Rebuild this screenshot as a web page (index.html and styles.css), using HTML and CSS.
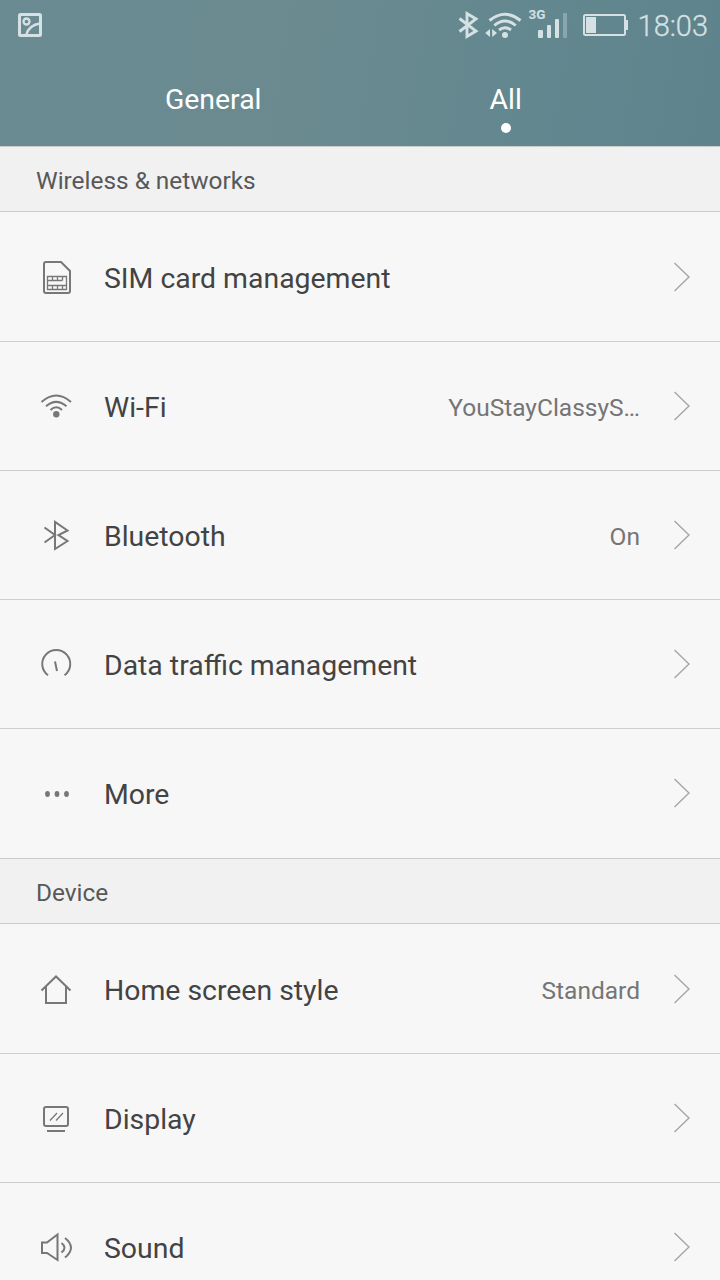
FILE: index.html
```html
<!DOCTYPE html>
<html lang="en">
<head>
  <meta charset="utf-8">
  <title>Settings</title>
  <link rel="stylesheet" href="styles.css">
</head>
<body>

<div class="screen">
  <header class="header">
    <div class="status">
      <svg class="status-photo" width="24" height="24" viewBox="0 0 24 24">
        <rect x="1.500" y="1.500" width="21" height="21" rx="1"/>
        <circle class="fine" cx="8.500" cy="8.500" r="3"/>
        <path class="fine" d="M8 22C10 15.500 14.500 11.500 22 10.500"/>
      </svg>
      <svg class="status-icons" width="170" height="40" viewBox="458 5 170 40">
        <!-- bluetooth -->
        <path class="line" d="M459.500 18.500L476 31L467 36.500V13.500L476 19L459.500 31.500"/>
        <!-- wifi -->
        <path class="arc" d="M489.500 20.500Q505 8 520.500 20.500M494.300 25.500Q505 16.500 515.700 25.500M499 30Q505 25.500 511 30"/>
        <circle cx="505" cy="35" r="3"/>
        <path d="M490 29V37L485.200 33ZM492.200 29V37L497 33Z"/>
        <!-- signal -->
        <text x="528.500" y="18.500">3G</text>
        <rect x="538" y="30" width="5" height="8" rx="1"/>
        <rect x="547" y="25" width="4" height="13" rx="1"/>
        <rect x="555" y="19" width="4" height="19" rx="1"/>
        <rect class="dim" x="563" y="13" width="4" height="25" rx="1"/>
        <!-- battery -->
        <rect class="cell" x="584" y="15" width="41" height="20" rx="1.500"/>
        <rect x="586" y="17" width="10" height="16"/>
        <rect x="626" y="20" width="2" height="10"/>
      </svg>
      <span class="clock">18:03</span>
    </div>
    <nav class="tabs">
      <div class="tab"><span>General</span></div>
      <div class="tab active"><span>All</span></div>
    </nav>
  </header>

  <h2 class="section">Wireless &amp; networks</h2>
  <ul class="list">
    <li class="row">
      <svg class="icon" viewBox="0 0 32 36">
        <path d="M6 3H21L30 12V32Q30 34 28 34H6Q4 34 4 32V5Q4 3 6 3Z"/>
        <path class="thin" d="M7.500 17.500H26.500V30.500H7.500ZM7.500 21.500H22.500M7.500 26.500H26.500M12.500 17.500V21.500M17.500 17.500V21.500M22.500 17.500V21.500M12.500 26.500V30.500M17.500 26.500V30.500M22.500 26.500V30.500"/>
      </svg>
      <span class="name">SIM card management</span>
      <svg class="chevron" viewBox="0 0 18 30"><path d="M1.500 1L16 15L1.500 29"/></svg>
    </li>
    <li class="row">
      <svg class="icon" viewBox="0 0 32 36">
        <path d="M1.500 14Q16.200 1 31 14M6 18.300Q16.200 9.500 26.500 18.300M10.500 22Q16.200 16.500 22 22"/>
        <circle class="solid" cx="16.300" cy="26.300" r="3.200"/>
      </svg>
      <span class="name">Wi-Fi</span>
      <span class="value">YouStayClassyS…</span>
      <svg class="chevron" viewBox="0 0 18 30"><path d="M1.500 1L16 15L1.500 29"/></svg>
    </li>
    <li class="row">
      <svg class="icon" viewBox="0 0 32 36">
        <path d="M4.500 10.500L15 18L4.500 25.500M15 18V5L27.500 13.500L18.500 18L27.500 24L15 32Z"/>
      </svg>
      <span class="name">Bluetooth</span>
      <span class="value">On</span>
      <svg class="chevron" viewBox="0 0 18 30"><path d="M1.500 1L16 15L1.500 29"/></svg>
    </li>
    <li class="row">
      <svg class="icon" viewBox="0 0 32 36">
        <path d="M8 29.300A14 14 0 1 1 24.500 29.300M15 15.500L17 25"/>
      </svg>
      <span class="name">Data traffic management</span>
      <svg class="chevron" viewBox="0 0 18 30"><path d="M1.500 1L16 15L1.500 29"/></svg>
    </li>
    <li class="row">
      <svg class="icon" viewBox="0 0 32 36">
        <ellipse class="solid" cx="7.500" cy="19" rx="2.400" ry="3"/>
        <ellipse class="solid" cx="17" cy="19" rx="2.400" ry="3"/>
        <ellipse class="solid" cx="26.500" cy="19" rx="2.400" ry="3"/>
      </svg>
      <span class="name">More</span>
      <svg class="chevron" viewBox="0 0 18 30"><path d="M1.500 1L16 15L1.500 29"/></svg>
    </li>
  </ul>

  <h2 class="section">Device</h2>
  <ul class="list">
    <li class="row">
      <svg class="icon" viewBox="0 0 32 36">
        <path d="M1.500 19.500L16 5.500L30.500 19.500M6 16V32H26V16"/>
      </svg>
      <span class="name">Home screen style</span>
      <span class="value">Standard</span>
      <svg class="chevron" viewBox="0 0 18 30"><path d="M1.500 1L16 15L1.500 29"/></svg>
    </li>
    <li class="row">
      <svg class="icon" viewBox="0 0 32 36">
        <rect x="4" y="7" width="24" height="19" rx="2"/>
        <path d="M7 31H25"/>
        <path class="thin" d="M10 20.500L17 13M16 20.500L23 13"/>
      </svg>
      <span class="name">Display</span>
      <svg class="chevron" viewBox="0 0 18 30"><path d="M1.500 1L16 15L1.500 29"/></svg>
    </li>
    <li class="row">
      <svg class="icon" viewBox="0 0 32 36">
        <path d="M2 13.500H7L17.500 5.500V31L7 24H2ZM21.500 14Q27.500 18.500 21.500 23.500M25 9Q37 18.500 25 28.500"/>
      </svg>
      <span class="name">Sound</span>
      <svg class="chevron" viewBox="0 0 18 30"><path d="M1.500 1L16 15L1.500 29"/></svg>
    </li>
  </ul>
</div>

</body>
</html>
```
FILE: styles.css
```css
body {
  margin: 0;
  font-family: Roboto, "Liberation Sans", sans-serif;
  background: #f7f7f7;
}

.screen {
  width: 720px;
  height: 1280px;
  overflow: hidden;
}

/* header */

.header {
  height: 146px;
  background: linear-gradient(100deg, #6a8b92 0%, #6a8a90 45%, #62878f 75%, #5e838c 100%);
  color: #fff;
}

.status {
  display: flex;
  align-items: center;
  box-sizing: border-box;
  height: 50px;
  padding: 0 12px 0 18px;
}

.status-photo {
  fill: none;
  stroke: #d5e1e3;
  stroke-width: 3;
}

.status-photo .fine {
  stroke-width: 2.3;
}

.status-icons {
  margin-left: auto;
  fill: #d5e1e3;
}

.status-icons .line,
.status-icons .arc,
.status-icons .cell {
  fill: none;
  stroke: #d5e1e3;
  stroke-width: 2.9;
}

.status-icons .cell {
  stroke-width: 2;
}

.status-icons .dim {
  opacity: 0.35;
}

.status-icons text {
  font-size: 13.5px;
  font-weight: 700;
}

.clock {
  margin-left: 10px;
  padding-top: 2px;
  font-size: 29px;
  font-weight: 300;
  line-height: 50px;
  color: #d5e1e3;
  -webkit-text-stroke: 0.3px #d5e1e3;
}

.tabs {
  display: flex;
  justify-content: center;
  padding: 0 68px 0 67px;
}

.tab {
  flex: 1;
  display: flex;
  flex-direction: column;
  align-items: center;
  padding-top: 33px;
  font-size: 28.4px;
  line-height: 34px;
}

.active::after {
  content: "";
  width: 10px;
  height: 10px;
  margin-top: 6px;
  border-radius: 50%;
  background: #fff;
}

/* settings list */

.section {
  box-sizing: border-box;
  height: 66px;
  margin: 0;
  padding: 2px 36px 0;
  border: 1px solid #cbcbcb;
  border-width: 1px 0;
  background: #f1f1f1;
  color: #585858;
  font-size: 24.4px;
  font-weight: 400;
  line-height: 64px;
}

.list {
  margin: 0;
  padding: 1px 0 0;
  list-style: none;
}

.row {
  display: flex;
  align-items: center;
  box-sizing: border-box;
  height: 129px;
  padding: 0 29px 0 40px;
  border-bottom: 1px solid #cecece;
}

.row:last-child {
  border-color: transparent;
}

.icon {
  width: 32px;
  height: 36px;
  margin-right: 32px;
  fill: none;
  stroke: #777;
  stroke-width: 2;
}

.icon .thin {
  stroke-width: 1.3;
}

.icon .solid {
  fill: #777;
  stroke: none;
}

.name {
  flex: 1;
  padding-top: 2px;
  font-size: 28.4px;
  line-height: 33px;
  color: #434343;
}

.value {
  padding-top: 3px;
  font-size: 24.5px;
  line-height: 28px;
  color: #757575;
}

.chevron {
  width: 18px;
  height: 30px;
  margin-left: 33px;
  fill: none;
  stroke: #a6a6a6;
  stroke-width: 1.4;
}
```
